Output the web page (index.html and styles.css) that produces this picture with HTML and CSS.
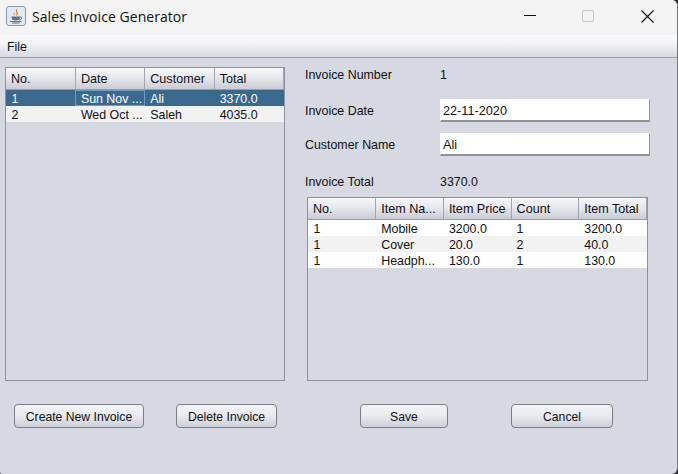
FILE: index.html
```html
<!DOCTYPE html>
<html lang="en">
<head>
    <meta charset="UTF-8">
    <title>Sales Invoice Generator</title>
    <link rel="stylesheet" href="styles.css">
</head>
<body>

    <div class="window">
        <div class="titlebar">
            <svg class="app-icon" width="20" height="20" viewBox="0 0 20 20">
                <rect x="0.5" y="0.5" width="19" height="19" rx="2.5" fill="#e3e9f1" stroke="#8298b5"/>
                <path d="M11 2.5 C8 5 12.5 6.5 9.5 10 C14 8 10.5 5.5 11 2.5 Z" fill="#e5761f"/>
                <path d="M8.5 6.5 C7 8 8 9 8.7 10 C7.8 8.8 9 8 8.5 6.5 Z" fill="#e5761f"/>
                <path d="M5.5 10.5 H14 C14 13.5 12.5 14.5 9.8 14.5 C7 14.5 5.5 13.5 5.5 10.5 Z" fill="#66727f"/>
                <path d="M14 11 C16.5 10.5 16.5 13.5 13 14" fill="none" stroke="#66727f"/>
                <path d="M4 15.5 H15.5 M6 17 H13.5" stroke="#66727f"/>
            </svg>
            <span class="app-title">Sales Invoice Generator</span>
            <div class="window-controls">
                <span class="win-btn btn-min"><svg width="12" height="12" viewBox="0 0 12 12"><path d="M0 5.5 H12" stroke="#111"/></svg></span>
                <span class="win-btn btn-max"><svg width="12" height="12" viewBox="0 0 12 12"><rect x="0.5" y="0.5" width="11" height="11" rx="1.5" fill="none" stroke="#c8c8c8"/></svg></span>
                <span class="win-btn btn-close"><svg width="13" height="13" viewBox="0 0 13 13"><path d="M0.5 0.5 L12.5 12.5 M12.5 0.5 L0.5 12.5" stroke="#111" stroke-width="1.1"/></svg></span>
            </div>
        </div>

        <div class="menubar">File</div>

        <div class="content">
            <div class="panels">
                <div class="left-panel">
                    <div class="table-box invoices">
                        <table>
                            <thead>
                                <tr><th>No.</th><th>Date</th><th>Customer</th><th>Total</th></tr>
                            </thead>
                            <tbody>
                                <tr class="selected"><td>1</td><td class="focused">Sun Nov ...</td><td>Ali</td><td>3370.0</td></tr>
                                <tr class="alt"><td>2</td><td>Wed Oct ...</td><td>Saleh</td><td>4035.0</td></tr>
                            </tbody>
                        </table>
                    </div>
                </div>

                <div class="right-panel">
                    <div class="form-row row-number"><label>Invoice Number</label><span>1</span></div>
                    <div class="form-row row-date"><label>Invoice Date</label><input type="text" value="22-11-2020"></div>
                    <div class="form-row row-name"><label>Customer Name</label><input type="text" value="Ali"></div>
                    <div class="form-row row-total"><label>Invoice Total</label><span>3370.0</span></div>

                    <div class="table-box items">
                        <table>
                            <thead>
                                <tr><th>No.</th><th>Item Na...</th><th>Item Price</th><th>Count</th><th>Item Total</th></tr>
                            </thead>
                            <tbody>
                                <tr><td>1</td><td>Mobile</td><td>3200.0</td><td>1</td><td>3200.0</td></tr>
                                <tr class="alt"><td>1</td><td>Cover</td><td>20.0</td><td>2</td><td>40.0</td></tr>
                                <tr><td>1</td><td>Headph...</td><td>130.0</td><td>1</td><td>130.0</td></tr>
                            </tbody>
                        </table>
                    </div>
                </div>
            </div>

            <div class="buttons">
                <button type="button" class="btn-create">Create New Invoice</button>
                <button type="button" class="btn-delete">Delete Invoice</button>
                <button type="button" class="btn-save">Save</button>
                <button type="button" class="btn-cancel">Cancel</button>
            </div>
        </div>
    </div>

</body>
</html>
```

FILE: styles.css
```css
html { background: #2a2a2a; }
body { margin: 0; width: 678px; height: 474px; overflow: hidden; font-family: "Liberation Sans", Arial, sans-serif; font-size: 12.4px; color: #111; }

.window { width: 678px; height: 474px; display: flex; flex-direction: column; background: #d6d9e2; border-radius: 0 6px 6px 2px; overflow: hidden; box-sizing: border-box; border-right: 1px solid #74767c; }

.titlebar { height: 35px; flex: none; display: flex; align-items: center; background: #f3f3f3; padding-left: 6px; }
.app-icon { flex: none; margin-top: -3px; }
.app-title { margin-left: 6px; font-family: "Open Sans", "Liberation Sans", sans-serif; font-size: 14px; letter-spacing: 0.05px; color: #111; margin-top: -2px; }
.window-controls { margin-left: auto; display: flex; align-items: center; margin-right: 1px; margin-top: -3px; }
.win-btn { display: flex; justify-content: center; }
.btn-min { width: 56px; }
.btn-max { width: 60px; }
.btn-close { width: 58px; }

.menubar { height: 22px; flex: none; line-height: 24px; padding-left: 7px; background: linear-gradient(#fbfbfc, #f4f5f7 35%, #d6d9e1); border-bottom: 1px solid #9a9ca8; }

.content { flex: 1; display: flex; flex-direction: column; }
.panels { display: flex; padding: 9px 0 0 5px; }

.left-panel { width: 280px; flex: none; }
.right-panel { width: 345px; margin-left: 20px; flex: none; }

.table-box { box-sizing: border-box; height: 314px; border: 1px solid #8f929e; background: #d6d9e2; }
.table-box table { width: 100%; border-collapse: collapse; table-layout: fixed; }
.table-box th { height: 21px; padding: 0 0 0 5px; text-align: left; font-size: 12.6px; font-weight: normal; background: linear-gradient(#f6f7f9, #e6e8ed 45%, #c9ccd6); border-right: 1px solid #a3a6b1; border-bottom: 1px solid #9a9ca8; }
.table-box td { box-sizing: border-box; height: 16px; padding: 2px 0 0 5.5px; line-height: 14px; background: #fff; white-space: nowrap; overflow: hidden; }
.table-box tr.alt td { background: #f2f2f2; }
.table-box tr.selected td { background: #39698c; color: #fff; }
.table-box tr.selected td.focused { box-shadow: inset 0 0 0 1px #6d9dc7; }

.invoices { width: 280px; }
.items { width: 341px; height: 184px; margin: 8px 0 0 2px; }

.form-row { display: flex; align-items: center; }
.form-row label { width: 135px; flex: none; }
.form-row input { box-sizing: border-box; width: 210px; height: 23px; padding: 1px 0 0 2px; font: inherit; font-size: 12.7px; color: #111; background: #fff; border: 1px solid #fff; border-right: 1px solid #8f929e; border-bottom: 2px solid #8f929e; outline: none; }
.row-number { height: 14px; margin-top: 1px; }
.row-date { margin-top: 17px; }
.row-name { margin-top: 11px; }
.row-total { height: 14px; margin-top: 19px; }

.buttons { display: flex; padding: 23px 0 0 14px; }
.buttons button { box-sizing: border-box; height: 24px; padding: 1px 0 0; font: inherit; font-size: 12.2px; color: #111; background: linear-gradient(#f3f4f6, #e9ebef 45%, #cdd0d9); border: 1px solid #7c7e86; border-radius: 4px; }
.btn-create { width: 130px; }
.btn-delete { width: 101px; margin-left: 32px; }
.btn-save { width: 88px; margin-left: 83px; }
.btn-cancel { width: 102px; margin-left: 63px; }
```
